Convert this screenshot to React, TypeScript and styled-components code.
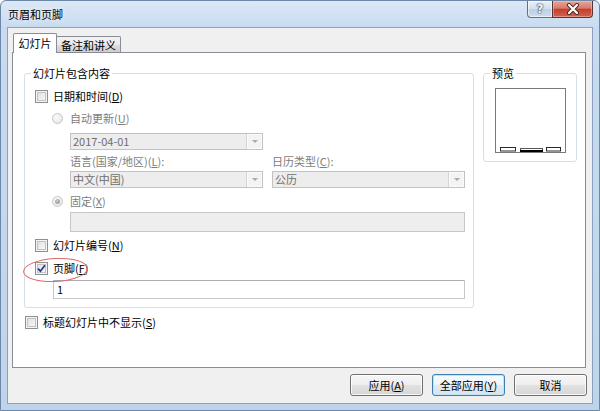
import React from "react";
import styled, { createGlobalStyle, css } from "styled-components";

const FONT = `"Microsoft YaHei", "Noto Sans CJK SC", sans-serif`;

const GlobalStyle = createGlobalStyle`
  html, body { margin: 0; padding: 0; background: #ffffff; }
  body { font-family: ${FONT}; font-size: 11px; }
  #root { width: 600px; height: 411px; }
`;

const Window = styled.div`
  box-sizing: border-box;
  width: 600px;
  height: 411px;
  border: 1px solid #6d87a8;
  border-radius: 6px 6px 0 0;
  background: linear-gradient(180deg, #dbe8f6 0px, #c8dbf0 26px, #bfd4eb 100%);
  padding: 0 6px 6px;
  display: flex;
  flex-direction: column;
  font-family: ${FONT};
  font-size: 11px;
  color: #000;
  overflow: hidden;
`;

const TitleBar = styled.div`
  height: 26px;
  display: flex;
  align-items: flex-start;
  margin: 0 -6px;
  padding: 0 6px 0 7px;
`;

const Title = styled.span`
  align-self: center;
  line-height: 16px;
  color: #000;
  text-shadow: 0 0 6px rgba(255, 255, 255, 0.9);
  white-space: nowrap;
`;

const Captions = styled.div`
  display: flex;
  margin-left: auto;
`;

const CaptionBtn = styled.div<{ $kind: "help" | "close" }>`
  box-sizing: border-box;
  height: 17px;
  display: flex;
  align-items: center;
  justify-content: center;
  border: 1px solid #5b7190;
  border-top: none;
  ${(p) =>
    p.$kind === "help"
      ? css`
          width: 25px;
          border-right: none;
          border-radius: 0 0 0 4px;
          background: linear-gradient(180deg, #e9f0f8 0%, #d3e0ee 48%, #bccfe4 52%, #cfdeee 100%);
          box-shadow: inset 0 0 0 1px rgba(255, 255, 255, 0.55);
        `
      : css`
          width: 41px;
          border-color: #5a3530;
          border-radius: 0 0 4px 0;
          background: linear-gradient(180deg, #e8a496 0%, #d97a69 45%, #c4402d 52%, #d0634f 100%);
          box-shadow: inset 0 0 0 1px rgba(255, 210, 200, 0.45);
        `}
`;

const HelpGlyph = styled.span`
  font-family: "DejaVu Sans", sans-serif;
  font-weight: bold;
  font-size: 12px;
  line-height: 12px;
  color: #f4f7fb;
  text-shadow: 0 0 1px #3b4a5e, 0 0 1px #3b4a5e, 0 0 2px #3b4a5e;
`;

const Client = styled.div`
  flex: 1;
  box-sizing: border-box;
  border: 1px solid #8aa2bf;
  background: #f0f0f0;
  padding: 5px 6px 7px 4px;
  display: flex;
  flex-direction: column;
`;

const TabStrip = styled.div`
  display: flex;
  align-items: flex-end;
  height: 19px;
  padding-left: 1px;
`;

const Tab = styled.div<{ $active?: boolean; $w: number }>`
  box-sizing: border-box;
  width: ${(p) => p.$w}px;
  border: 1px solid #898c95;
  border-radius: 2px 2px 0 0;
  display: flex;
  align-items: center;
  justify-content: center;
  white-space: nowrap;
  line-height: 14px;
  ${(p) =>
    p.$active
      ? css`
          height: 20px;
          margin-bottom: -1px;
          border-bottom: none;
          background: #ffffff;
          position: relative;
          z-index: 1;
          padding-bottom: 1px;
        `
      : css`
          height: 16px;
          margin-left: -1px;
          border-bottom: none;
          background: linear-gradient(180deg, #f2f2f2 0%, #ebebeb 50%, #dddddd 51%, #cfcfcf 100%);
        `}
`;

const Panel = styled.div`
  flex: 1;
  box-sizing: border-box;
  border: 1px solid #898c95;
  background: #ffffff;
  padding: 12px 8px 0 11px;
`;

const TopRow = styled.div`
  display: flex;
  align-items: flex-start;
  gap: 9px;
`;

const Group = styled.fieldset<{ $w: number }>`
  box-sizing: border-box;
  width: ${(p) => p.$w}px;
  margin: 0;
  padding: 0;
  min-width: 0;
  border: 1px solid #d5dfe5;
  border-radius: 3px;
`;

const Legend = styled.legend`
  margin-left: 6px;
  padding: 0 2px;
  line-height: 16px;
  font-size: 11px;
  color: #000;
`;

const GroupBody = styled.div`
  padding: 0 7px 8px 10px;
`;

const PreviewBody = styled.div`
  padding: 7px 0 8px;
  display: flex;
  justify-content: center;
`;

const PreviewBox = styled.div`
  box-sizing: border-box;
  width: 71px;
  height: 65px;
  border: 1px solid #7a7a7a;
  background: #ffffff;
  display: flex;
`;

const Row = styled.div<{ $mt?: number; $indent?: number; $h?: number }>`
  position: relative;
  display: flex;
  align-items: center;
  height: ${(p) => p.$h ?? 20}px;
  margin-top: ${(p) => p.$mt ?? 0}px;
  margin-left: ${(p) => p.$indent ?? 0}px;
`;

const Label = styled.span<{ $disabled?: boolean }>`
  line-height: 16px;
  white-space: nowrap;
  color: ${(p) => (p.$disabled ? "#7d7d7d" : "#000")};
`;

const CheckBox = styled.span`
  box-sizing: border-box;
  flex: none;
  width: 13px;
  height: 13px;
  margin-right: 5px;
  border: 1px solid #8e8f8f;
  background: linear-gradient(135deg, #d9dadb 0%, #eeeeef 55%, #fbfbfb 100%);
  box-shadow: inset 0 0 0 1px #f4f4f4, inset 0 0 0 2px #bfc3c7;
  display: flex;
  align-items: center;
  justify-content: center;
`;

const Radio = styled.span<{ $checked?: boolean }>`
  box-sizing: border-box;
  flex: none;
  width: 11px;
  height: 11px;
  margin-right: 7px;
  border-radius: 50%;
  border: 1px solid #c6c6c6;
  background: radial-gradient(circle at 35% 35%, #fafafa 0%, #e4e4e4 100%);
  display: flex;
  align-items: center;
  justify-content: center;
  ${(p) =>
    p.$checked &&
    css`
      &::after {
        content: "";
        width: 5px;
        height: 5px;
        border-radius: 50%;
        background: radial-gradient(circle at 40% 35%, #c8c8c8 0%, #8e8e8e 100%);
      }
    `}
`;

const Pair = styled.div<{ $mt?: number; $h?: number }>`
  display: grid;
  grid-template-columns: 193px 193px;
  column-gap: 9px;
  margin-left: 35px;
  margin-top: ${(p) => p.$mt ?? 0}px;
  height: ${(p) => p.$h ?? 17}px;
  align-items: center;
`;

const Combo = styled.div`
  box-sizing: border-box;
  height: 17px;
  border: 1px solid #c2c2c2;
  background: #ededed;
  display: flex;
  align-items: stretch;
  color: #6d6d6d;
`;

const ComboText = styled.span`
  flex: 1;
  padding-left: 2px;
  line-height: 15px;
  white-space: nowrap;
`;

const ComboBtn = styled.span`
  box-sizing: border-box;
  width: 16px;
  border-left: 1px solid #d4d4d4;
  background: #f3f3f3;
  box-shadow: inset 0 0 0 1px #fbfbfb;
  display: flex;
  align-items: center;
  justify-content: center;
  &::after {
    content: "";
    border-left: 3px solid transparent;
    border-right: 3px solid transparent;
    border-top: 3px solid #a9a9a9;
  }
`;

const TextField = styled.div<{ $disabled?: boolean; $indent: number; $w: number; $h: number; $mt: number }>`
  box-sizing: border-box;
  width: ${(p) => p.$w}px;
  height: ${(p) => p.$h}px;
  margin-left: ${(p) => p.$indent}px;
  margin-top: ${(p) => p.$mt}px;
  padding-left: 3px;
  line-height: ${(p) => p.$h - 2}px;
  ${(p) =>
    p.$disabled
      ? css`
          border: 1px solid #c6c6c6;
          background: #eeeeee;
        `
      : css`
          border: 1px solid #c4c7cc;
          border-top-color: #abadb3;
          background: #ffffff;
        `}
`;

const Ellipse = styled.span`
  position: absolute;
  left: -12px;
  top: 0px;
  width: 65px;
  height: 24px;
  box-sizing: border-box;
  border: 1px solid #e06a6a;
  border-radius: 50%;
  transform: rotate(-3deg);
  pointer-events: none;
`;

const ButtonRow = styled.div`
  display: flex;
  justify-content: flex-end;
  gap: 9px;
  margin-top: 6px;
  margin-right: -1px;
`;

const Button = styled.button<{ $default?: boolean }>`
  box-sizing: border-box;
  width: 73px;
  height: 22px;
  padding: 0;
  border: 1px solid #707070;
  border-radius: 3px;
  font-family: ${FONT};
  font-size: 11px;
  color: #000;
  background: linear-gradient(180deg, #f6f6f6 0%, #eeeeee 50%, #e1e1e1 52%, #d7d7d7 100%);
  box-shadow: inset 0 0 0 1px rgba(255, 255, 255, 0.8);
  ${(p) =>
    p.$default &&
    css`
      border-color: #3c7fb1;
      background: linear-gradient(180deg, #f7fbfe 0%, #eef5fa 50%, #e2ebf2 52%, #d9e3ec 100%);
      box-shadow: inset 0 0 0 1px #bfe3f8;
    `}
`;

const Key = styled.u``;

const CheckMark = () => (
  <svg width="9" height="9" viewBox="0 0 9 9">
    <path d="M1 4.6 L3.4 7.2 L8 1.2" fill="none" stroke="#25378c" strokeWidth="1.7" />
  </svg>
);

const CloseGlyph = () => (
  <svg width="14" height="12" viewBox="0 0 14 12">
    <path d="M3 2 L11 10 M11 2 L3 10" stroke="#4a2a25" strokeWidth="4" strokeLinecap="round" />
    <path d="M3 2 L11 10 M11 2 L3 10" stroke="#ffffff" strokeWidth="2.2" strokeLinecap="round" />
  </svg>
);

const PreviewArt = () => (
  <svg width="69" height="63" viewBox="0 0 69 63">
    <rect x="4.5" y="58.5" width="15" height="3.5" fill="#fff" stroke="#2a2a2a" strokeWidth="1" />
    <rect x="24.5" y="59.5" width="22" height="3" fill="#fff" stroke="#555" strokeWidth="1" />
    <rect x="24" y="61" width="23" height="2" fill="#000" />
    <rect x="50.5" y="58.5" width="14" height="3.5" fill="#fff" stroke="#2a2a2a" strokeWidth="1" />
  </svg>
);

export default function App() {
  return (
    <>
      <GlobalStyle />
      <Window>
        <TitleBar>
          <Title>页眉和页脚</Title>
          <Captions>
            <CaptionBtn $kind="help">
              <HelpGlyph>?</HelpGlyph>
            </CaptionBtn>
            <CaptionBtn $kind="close">
              <CloseGlyph />
            </CaptionBtn>
          </Captions>
        </TitleBar>
        <Client>
          <TabStrip>
            <Tab $active $w={44}>幻灯片</Tab>
            <Tab $w={65}>备注和讲义</Tab>
          </TabStrip>
          <Panel>
            <TopRow>
              <Group $w={450}>
                <Legend>幻灯片包含内容</Legend>
                <GroupBody>
                  <Row $mt={5}>
                    <CheckBox />
                    <Label>
                      日期和时间(<Key>D</Key>)
                    </Label>
                  </Row>
                  <Row $mt={2} $indent={17}>
                    <Radio />
                    <Label $disabled>
                      自动更新(<Key>U</Key>)
                    </Label>
                  </Row>
                  <Pair $mt={5}>
                    <Combo>
                      <ComboText>2017-04-01</ComboText>
                      <ComboBtn />
                    </Combo>
                  </Pair>
                  <Pair $mt={3} $h={16}>
                    <Label $disabled>
                      语言(国家/地区)(<Key>L</Key>):
                    </Label>
                    <Label $disabled>
                      日历类型(<Key>C</Key>):
                    </Label>
                  </Pair>
                  <Pair $mt={2}>
                    <Combo>
                      <ComboText>中文(中国)</ComboText>
                      <ComboBtn />
                    </Combo>
                    <Combo>
                      <ComboText>公历</ComboText>
                      <ComboBtn />
                    </Combo>
                  </Pair>
                  <Row $mt={3} $indent={17}>
                    <Radio $checked />
                    <Label $disabled>
                      固定(<Key>X</Key>)
                    </Label>
                  </Row>
                  <TextField $disabled $indent={35} $w={395} $h={20} $mt={1} />
                  <Row $mt={3}>
                    <CheckBox />
                    <Label>
                      幻灯片编号(<Key>N</Key>)
                    </Label>
                  </Row>
                  <Row $mt={3}>
                    <CheckBox>
                      <CheckMark />
                    </CheckBox>
                    <Label>
                      页脚(<Key>F</Key>)
                    </Label>
                    <Ellipse />
                  </Row>
                  <TextField $indent={18} $w={412} $h={19} $mt={2}>
                    1
                  </TextField>
                </GroupBody>
              </Group>
              <Group $w={94}>
                <Legend>预览</Legend>
                <PreviewBody>
                  <PreviewBox>
                    <PreviewArt />
                  </PreviewBox>
                </PreviewBody>
              </Group>
            </TopRow>
            <Row $mt={4} $indent={1}>
              <CheckBox />
              <Label>
                标题幻灯片中不显示(<Key>S</Key>)
              </Label>
            </Row>
          </Panel>
          <ButtonRow>
            <Button>
              应用(<Key>A</Key>)
            </Button>
            <Button $default>
              全部应用(<Key>Y</Key>)
            </Button>
            <Button>取消</Button>
          </ButtonRow>
        </Client>
      </Window>
    </>
  );
}
